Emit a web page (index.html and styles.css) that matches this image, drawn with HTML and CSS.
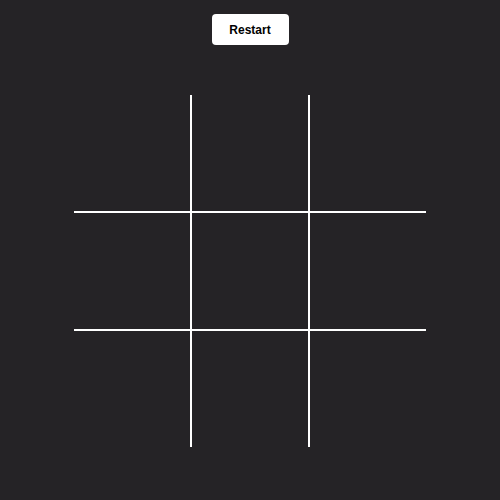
FILE: index.html
```html
<!DOCTYPE html>
<html lang="en">
<head>
    <meta charset="UTF-8">
    <meta name="viewport" content="width=device-width, initial-scale=1.0">
    <title>Tic Tac Toe</title>
    <link rel="stylesheet" href="styles.css">
</head>
<body>
<button class="restart" type="button">Restart</button>
<div class="board">
    <div class="cell"></div>
    <div class="cell"></div>
    <div class="cell"></div>
    <div class="cell"></div>
    <div class="cell"></div>
    <div class="cell"></div>
    <div class="cell"></div>
    <div class="cell"></div>
    <div class="cell"></div>
</div>
</body>
</html>
```

FILE: styles.css
```css
body {
    margin: 0;
    height: 100vh;
    background-color: #252326;
    display: flex;
    flex-direction: column;
    align-items: center;
    font-family: "Liberation Sans", Arial, sans-serif;
}

.restart {
    margin-top: 14px;
    width: 77px;
    height: 31px;
    padding: 0;
    border: none;
    border-radius: 4px;
    background-color: #ffffff;
    color: #000000;
    font-family: inherit;
    font-size: 12px;
    font-weight: bold;
    cursor: pointer;
}

/* white gaps between the dark cells draw the grid lines */
.board {
    margin-top: 50px;
    display: grid;
    grid-template-columns: repeat(3, 116px);
    grid-template-rows: repeat(3, 116px);
    gap: 2px;
    background-color: #ffffff;
}

.cell {
    background-color: #252326;
}
```
